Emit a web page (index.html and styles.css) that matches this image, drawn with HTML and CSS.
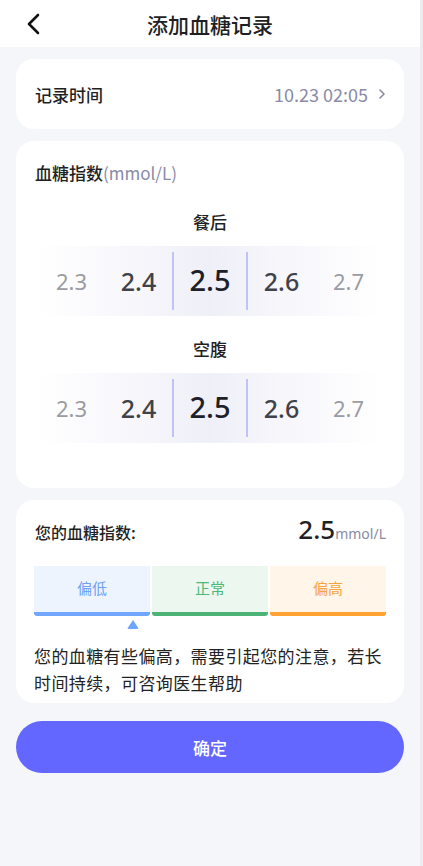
FILE: index.html
```html
<!doctype html>
<html>
	<head>
		<meta charset="utf-8" />
		<meta name="viewport" content="width=device-width, initial-scale=1" />
		<title>添加血糖记录</title>
		<link rel="stylesheet" href="styles.css">
	</head>
	<body>
		<div class="screen">
			<main class="page">
				<header class="topbar">
					<button type="button" class="back" aria-label="返回">
						<svg width="16" height="24" viewBox="0 0 16 24">
							<polyline points="12,3 3,12 12,21" fill="none" stroke="#111" stroke-width="2.6" stroke-linecap="round" stroke-linejoin="round" />
						</svg>
					</button>
					<h1>添加血糖记录</h1>
				</header>

				<section class="card time-card">
					<span class="label">记录时间</span>
					<span class="time">
						10.23 02:05
						<svg width="8" height="12" viewBox="0 0 8 12">
							<polyline points="2,2 6,6 2,10" fill="none" stroke="#8a8aa6" stroke-width="1.6" stroke-linecap="round" stroke-linejoin="round" />
						</svg>
					</span>
				</section>

				<section class="card index-card">
					<h2 class="label">血糖指数<span class="unit">(mmol/L)</span></h2>

					<div class="picker-group">
						<h3>餐后</h3>
						<div class="picker">
							<span class="far">2.3</span>
							<span class="near">2.4</span>
							<span class="current">2.5</span>
							<span class="near">2.6</span>
							<span class="far">2.7</span>
						</div>
					</div>

					<div class="picker-group">
						<h3>空腹</h3>
						<div class="picker">
							<span class="far">2.3</span>
							<span class="near">2.4</span>
							<span class="current">2.5</span>
							<span class="near">2.6</span>
							<span class="far">2.7</span>
						</div>
					</div>
				</section>

				<section class="card result-card">
					<div class="result-head">
						<span class="label">您的血糖指数:</span>
						<span class="result-value">2.5<small>mmol/L</small></span>
					</div>

					<div class="levels">
						<div class="level low">偏低</div>
						<div class="level normal">正常</div>
						<div class="level high">偏高</div>
					</div>
					<div class="marker-row">
						<span class="marker"></span>
					</div>

					<p class="advice">您的血糖有些偏高，需要引起您的注意，若长时间持续，可咨询医生帮助</p>
				</section>

				<button type="button" class="confirm">确定</button>
			</main>
			<div class="gutter"></div>
		</div>
	</body>
</html>
```

FILE: styles.css
```css
* {
	box-sizing: border-box;
}

html {
	--font-main: "Noto Sans CJK SC", "Noto Sans", sans-serif;
	--color-fg: #1f1f24;
	--color-bg: #f5f6fa;
	--color-muted: #8a8aa6;
	--color-accent: #6467ff;
}

body {
	margin: 0;
	font-family: var(--font-main);
	color: var(--color-fg);
	background: var(--color-bg);
}

h1,
h2,
h3,
p {
	margin: 0;
}

.screen {
	display: grid;
	grid-template-columns: 1fr 5px;
	min-height: 866px;
}

.gutter {
	background: #ececf0;
}

.page {
	display: flex;
	flex-direction: column;
	gap: 12px;
	padding-bottom: 40px;
}

.topbar {
	display: grid;
	grid-template-columns: 60px 1fr 60px;
	align-items: center;
	height: 47px;
	background: #fff;
}

.back {
	appearance: none;
	border: none;
	background: none;
	padding: 0 0 0 26px;
	display: flex;
	align-items: center;
	height: 47px;
}

.topbar h1 {
	text-align: center;
	font-size: 21px;
	font-weight: 500;
}

.card {
	margin: 0 16px;
	background: #fff;
	border-radius: 18px;
}

.label {
	font-size: 17px;
	font-weight: 500;
}

.time-card {
	display: flex;
	justify-content: space-between;
	align-items: center;
	height: 70px;
	padding: 0 18px 0 19px;
}

.time {
	display: flex;
	align-items: center;
	gap: 10px;
	font-size: 18px;
	color: var(--color-muted);
}

.index-card {
	padding: 20px 0 0;
	height: 347px;
}

.index-card h2 {
	padding-left: 19px;
	line-height: 24px;
}

.unit {
	font-weight: 400;
	color: var(--color-muted);
	font-size: 17px;
}

.picker-group h3 {
	text-align: center;
	font-size: 17px;
	font-weight: 500;
	line-height: 22px;
}

.picker-group:first-of-type h3 {
	margin-top: 26px;
}

.picker-group + .picker-group h3 {
	margin-top: 22px;
}

.picker {
	display: grid;
	grid-template-columns: 67px 67px 76px 67px 67px;
	justify-content: center;
	align-items: center;
	height: 70px;
	margin: 13px 22px 0;
	background: linear-gradient(90deg,
		rgba(240, 240, 248, 0) 0%,
		rgba(246, 246, 251, 0.8) 25%,
		#efeff8 50%,
		rgba(246, 246, 251, 0.8) 75%,
		rgba(240, 240, 248, 0) 100%);
}

.picker span {
	text-align: center;
	font-family: "Noto Sans", sans-serif;
}

.picker .far {
	font-size: 22px;
	color: #9a9ca2;
}

.picker .near {
	font-size: 25px;
	font-weight: 500;
	color: #3f4248;
}

.picker .current {
	font-size: 29px;
	font-weight: 500;
	color: #1d2026;
	height: 58px;
	line-height: 56px;
	border-left: 2px solid #c2c2fb;
	border-right: 2px solid #c2c2fb;
}

.result-card {
	padding: 14px 18px 18px;
	height: 203px;
}

.result-head {
	display: flex;
	justify-content: space-between;
	align-items: baseline;
	padding-left: 1px;
}

.result-head .label {
	font-size: 16px;
}

.result-value {
	font-family: "Noto Sans", sans-serif;
	font-size: 26px;
	font-weight: 500;
	line-height: 30px;
}

.result-value small {
	font-size: 14px;
	font-weight: 400;
	color: var(--color-muted);
}

.levels {
	display: grid;
	grid-template-columns: repeat(3, 1fr);
	gap: 2px;
	margin-top: 17px;
}

.level {
	height: 50px;
	padding-top: 12px;
	text-align: center;
	font-size: 15px;
	border-bottom: 4px solid;
	border-radius: 0 0 3px 3px;
	line-height: 20px;
}

.low {
	background: #eef4fe;
	color: #6fa0f5;
	border-color: #70a6fb;
}

.normal {
	background: #ebf7ef;
	color: #4cb87a;
	border-color: #4db478;
}

.high {
	background: #fff5e9;
	color: #f7a440;
	border-color: #ffa232;
}

.marker-row {
	height: 12px;
	padding-left: 93px;
	padding-top: 4px;
}

.marker {
	display: block;
	width: 12px;
	height: 9px;
	background: #6ea6fb;
	clip-path: polygon(50% 0, 100% 100%, 0 100%);
	border-radius: 2px;
}

.advice {
	margin-top: 14px;
	font-size: 17px;
	letter-spacing: 0.4px;
	line-height: 27px;
	color: #222;
}

.confirm {
	appearance: none;
	border: none;
	margin: 6px 16px 0;
	height: 52px;
	border-radius: 26px;
	background: var(--color-accent);
	color: #fff;
	font: inherit;
	font-size: 17px;
	font-weight: 500;
}
```
